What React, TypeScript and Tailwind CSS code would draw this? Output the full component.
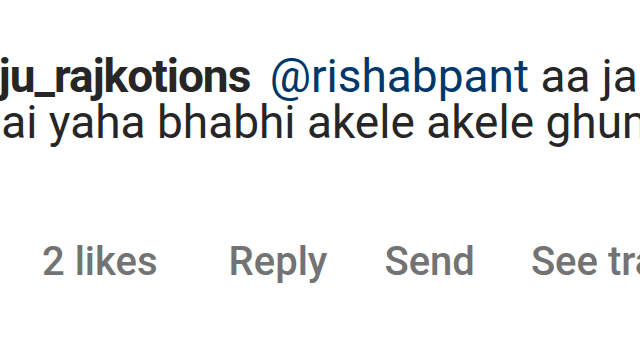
export default function App() {
  return (
    <div className="w-[640px] h-[360px] bg-white overflow-hidden" style={{ fontFamily: "Roboto, 'Noto Sans', sans-serif" }}>
      <div className="ml-[-40px] pt-[53px] text-[46px] leading-[46px] text-[#262626] whitespace-nowrap">
        <div>
          <span className="font-bold tracking-[-1px] mr-[8px]">raju_rajkotions</span>{" "}
          <span className="text-[#00376b]">@rishabpant</span> aa ja bhai
        </div>
        <div className="ml-[-10px]">bhai yaha bhabhi akele akele ghumti hai</div>
      </div>
      <div className="flex ml-[42px] mt-[96px] text-[40px] leading-[41px] font-medium text-[#737373] whitespace-nowrap">
        <span>2 likes</span>
        <span className="ml-[71px]">Reply</span>
        <span className="ml-[57px]">Send</span>
        <span className="ml-[56px]">See translation</span>
      </div>
    </div>
  );
}
